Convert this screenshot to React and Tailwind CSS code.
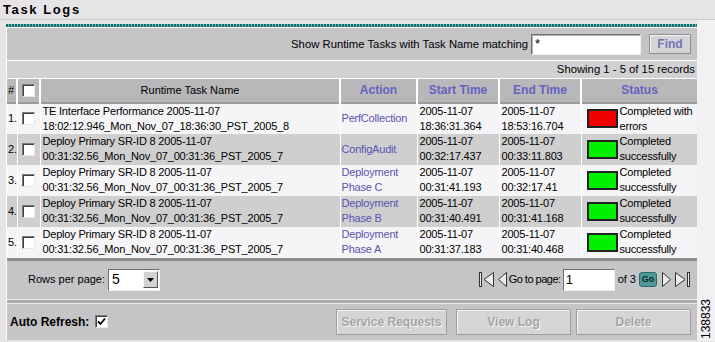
const ROWS = [
  {
    name: ['TE Interface Performance 2005-11-07', '18:02:12.946_Mon_Nov_07_18:36:30_PST_2005_8'],
    action: ['PerfCollection'],
    start: ['2005-11-07', '18:36:31.364'],
    end: ['2005-11-07', '18:53:16.704'],
    ok: false,
  },
  {
    name: ['Deploy Primary SR-ID 8 2005-11-07', '00:31:32.56_Mon_Nov_07_00:31:36_PST_2005_7'],
    action: ['ConfigAudit'],
    start: ['2005-11-07', '00:32:17.437'],
    end: ['2005-11-07', '00:33:11.803'],
    ok: true,
  },
  {
    name: ['Deploy Primary SR-ID 8 2005-11-07', '00:31:32.56_Mon_Nov_07_00:31:36_PST_2005_7'],
    action: ['Deployment', 'Phase C'],
    start: ['2005-11-07', '00:31:41.193'],
    end: ['2005-11-07', '00:32:17.41'],
    ok: true,
  },
  {
    name: ['Deploy Primary SR-ID 8 2005-11-07', '00:31:32.56_Mon_Nov_07_00:31:36_PST_2005_7'],
    action: ['Deployment', 'Phase B'],
    start: ['2005-11-07', '00:31:40.491'],
    end: ['2005-11-07', '00:31:41.168'],
    ok: true,
  },
  {
    name: ['Deploy Primary SR-ID 8 2005-11-07', '00:31:32.56_Mon_Nov_07_00:31:36_PST_2005_7'],
    action: ['Deployment', 'Phase A'],
    start: ['2005-11-07', '00:31:37.183'],
    end: ['2005-11-07', '00:31:40.468'],
    ok: true,
  },
];

function Box({ checked }) {
  return (
    <span className="inline-flex items-center justify-center w-[13px] h-[13px] bg-white border border-t-[#7a7a7a] border-l-[#7a7a7a] border-b-[#e8e8e8] border-r-[#e8e8e8] shadow-[inset_1px_1px_0_#404040]">
      {checked && (
        <svg width="9" height="9" viewBox="0 0 9 9">
          <path d="M1 4.5 L3.5 7 L8 1.5" stroke="#000" strokeWidth="1.8" fill="none" />
        </svg>
      )}
    </span>
  );
}

function Lines({ lines, className = '' }) {
  return (
    <div className={className}>
      {lines.map((l) => (
        <div key={l} className="whitespace-nowrap">
          {l}
        </div>
      ))}
    </div>
  );
}

function Arrow({ dir, bar }) {
  const left = dir === 'left';
  return (
    <svg width={bar ? 17 : 11} height="17" viewBox={bar ? '0 0 17 17' : '0 0 11 17'}>
      {bar && left && <rect x="1.5" y="1.5" width="2" height="14" fill="#eee" stroke="#333" strokeWidth="1" />}
      {bar && !left && <rect x="13.5" y="1.5" width="2" height="14" fill="#eee" stroke="#333" strokeWidth="1" />}
      {left ? (
        <polygon points={bar ? '15.5,1.5 6,8.5 15.5,15.5' : '9.5,1.5 1.5,8.5 9.5,15.5'} fill="#eee" stroke="#333" strokeWidth="1" />
      ) : (
        <polygon points={bar ? '1.5,1.5 11,8.5 1.5,15.5' : '1.5,1.5 9.5,8.5 1.5,15.5'} fill="#eee" stroke="#333" strokeWidth="1" />
      )}
    </svg>
  );
}

function GrayButton({ children, className = '' }) {
  return (
    <button
      className={`h-[26px] bg-[#d6d4d6] border border-[#a09ea0] shadow-[inset_1px_1px_0_#f2f2f2] text-[12px] font-bold text-[#a6a4a6] [text-shadow:1px_1px_0_#f4f4f4] ${className}`}
    >
      {children}
    </button>
  );
}

export default function App() {
  return (
    <div className="w-[715px] h-[342px] bg-[#e7e4e7] font-['Liberation_Sans',Arial,sans-serif] text-[11px] text-black overflow-hidden">
      <div className="h-[20px] flex items-center pl-[3px] border-b border-[#cbc8cb]">
        <h1 className="text-[13px] font-bold tracking-[1.6px] leading-none">Task Logs</h1>
      </div>

      <div className="flex h-[321px]">
        <div className="w-[697px] pt-[4px] pl-[6px]">
          <div className="h-[3px] bg-[repeating-linear-gradient(90deg,#14706a_0_2px,#7ab8b3_2px_3px)]" />
          <div className="border-l border-t border-white">
            <div className="h-[33px] bg-[#c5c4c6] border-b border-white flex items-center justify-end pr-[6px] text-[11.3px]">
              <span className="mr-[3px]">Show Runtime Tasks with Task Name matching</span>
              <div className="w-[110px] h-[21px] bg-white border border-t-[#6e6e6e] border-l-[#6e6e6e] border-b-[#f0f0f0] border-r-[#f0f0f0] shadow-[inset_1px_1px_0_#b0b0b0] pl-[3px] flex items-center text-[13px]">
                *
              </div>
              <button className="ml-[8px] w-[42px] h-[20px] bg-[#d6d4d6] border border-[#8e8c8e] shadow-[inset_1px_1px_0_#f4f4f4] text-[12px] font-bold text-[#7474b4]">
                Find
              </button>
            </div>
            <div className="h-[17px] bg-[#d1d0d2] flex items-center justify-end pr-[2px] text-[11.3px]">
              Showing 1 - 5 of 15 records
            </div>

            <table className="table-fixed border-collapse w-[690px]">
              <colgroup>
                <col className="w-[10px]" />
                <col className="w-[23px]" />
                <col className="w-[300px]" />
                <col className="w-[77px]" />
                <col className="w-[82px]" />
                <col className="w-[82px]" />
                <col className="w-[116px]" />
              </colgroup>
              <thead>
                <tr className="h-[24px] bg-[#b8b7b9] border-t border-white border-b-2 border-b-[#9a999b]">
                  <th className="font-normal text-left pl-[1px] border-r-2 border-white">#</th>
                  <th className="border-r-2 border-white">
                    <span className="flex justify-center">
                      <Box />
                    </span>
                  </th>
                  <th className="font-normal border-r-2 border-white">Runtime Task Name</th>
                  <th className="font-bold text-[12px] text-[#6464c0] border-r-2 border-white">Action</th>
                  <th className="font-bold text-[12px] text-[#6464c0] border-r-2 border-white">Start Time</th>
                  <th className="font-bold text-[12px] text-[#6464c0] border-r-2 border-white">End Time</th>
                  <th className="font-bold text-[12px] text-[#6464c0]">Status</th>
                </tr>
              </thead>
              <tbody>
                {ROWS.map((r, i) => (
                  <tr
                    key={i}
                    className={`h-[31px] leading-[15px] tracking-[-0.2px] ${i % 2 ? 'bg-[#cfcfd0]' : 'bg-[#f5f4f6]'}`}
                  >
                    <td className="pl-[1px] border-r border-white">{i + 1}.</td>
                    <td className="border-r border-white">
                      <span className="flex justify-center">
                        <Box />
                      </span>
                    </td>
                    <td className="pl-[2px] border-r border-white">
                      <Lines lines={r.name} />
                    </td>
                    <td className="pl-[1px] border-r border-white text-[#5656b0]">
                      <Lines lines={r.action} />
                    </td>
                    <td className="pl-[2px] border-r border-white">
                      <Lines lines={r.start} />
                    </td>
                    <td className="pl-[2px] border-r border-white">
                      <Lines lines={r.end} />
                    </td>
                    <td className="pl-[5px]">
                      <div className="flex items-center gap-[2px]">
                        <span
                          className={`shrink-0 w-[31px] h-[19px] border-2 border-[#222] ${r.ok ? 'bg-[#00f000]' : 'bg-[#f00000]'}`}
                        />
                        <Lines lines={r.ok ? ['Completed', 'successfully'] : ['Completed with', 'errors']} />
                      </div>
                    </td>
                  </tr>
                ))}
              </tbody>
            </table>

            <div className="h-[3px] bg-[#8d8c8e]" />
            <div className="h-[38px] bg-[#c5c4c6] flex items-center pl-[21px] pr-[6px]">
              <span className="mr-[3px]">Rows per page:</span>
              <div className="w-[52px] h-[22px] bg-white border border-t-[#6e6e6e] border-l-[#6e6e6e] border-b-[#f0f0f0] border-r-[#f0f0f0] flex items-center justify-between pl-[3px] pr-[1px]">
                <span className="text-[14px]">5</span>
                <span className="w-[15px] h-[17px] bg-[#d4d2d0] border border-t-[#fafafa] border-l-[#fafafa] border-b-[#555] border-r-[#555] flex items-center justify-center">
                  <svg width="7" height="4" viewBox="0 0 7 4">
                    <polygon points="0,0 7,0 3.5,4" fill="#000" />
                  </svg>
                </span>
              </div>
              <div className="ml-auto flex items-center">
                <Arrow dir="left" bar />
                <span className="ml-[2px] flex">
                  <Arrow dir="left" />
                </span>
                <span className="ml-[1px] mr-[2px] tracking-[-0.5px]">Go to page:</span>
                <div className="w-[52px] h-[22px] bg-white border border-t-[#6e6e6e] border-l-[#6e6e6e] border-b-[#f0f0f0] border-r-[#f0f0f0] pl-[2px] flex items-center text-[13px]">
                  1
                </div>
                <span className="ml-[3px]">of 3</span>
                <span className="ml-[3px] w-[18px] h-[15px] rounded-[3px] bg-[#4e9896] border border-[#2e6a68] text-[9px] font-bold text-[#102828] flex items-center justify-center">
                  Go
                </span>
                <span className="ml-[4px] flex">
                  <Arrow dir="right" />
                </span>
                <span className="ml-[2px] flex">
                  <Arrow dir="right" bar />
                </span>
              </div>
            </div>
            <div className="h-[5px] bg-[#adacae] border-y border-[#ececec]" />
            <div className="h-[36px] bg-[#c5c4c6] flex items-center pl-[3px] pr-[6px]">
              <span className="font-bold text-[12px] mr-[6px]">Auto Refresh:</span>
              <Box checked />
              <div className="ml-auto flex gap-[9px]">
                <GrayButton className="w-[111px]">Service Requests</GrayButton>
                <GrayButton className="w-[115px]">View Log</GrayButton>
                <GrayButton className="w-[115px] -ml-[4px]">Delete</GrayButton>
              </div>
            </div>
          </div>
        </div>
        <div className="flex-1 bg-[#f2f0f2] flex flex-col justify-end items-center pb-[2px]">
          <span className="[writing-mode:vertical-rl] rotate-180 text-[12px] leading-none">138833</span>
        </div>
      </div>
    </div>
  );
}
